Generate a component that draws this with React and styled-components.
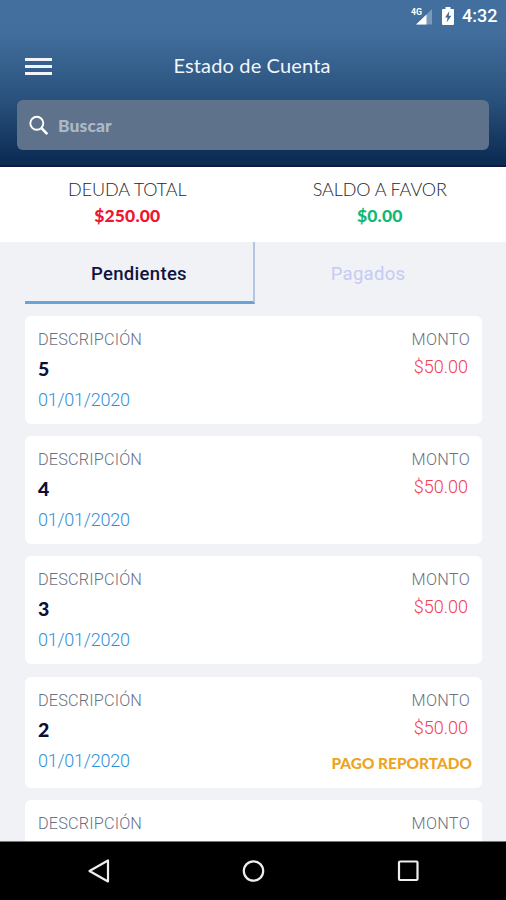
import React from 'react';
import styled, { createGlobalStyle } from 'styled-components';

const movements = [
  { id: 5, date: '01/01/2020', amount: '$50.00' },
  { id: 4, date: '01/01/2020', amount: '$50.00' },
  { id: 3, date: '01/01/2020', amount: '$50.00' },
  { id: 2, date: '01/01/2020', amount: '$50.00', reported: true },
];

const App = () => {
  return (
    <>
      <GlobalStyle />
      <Screen>
        <Header>
          <StatusBar>
            <svg width="22" height="20" viewBox="0 0 22 20">
              <path d="M21 3v15.500H5.500z" fill="#fff" fillOpacity=".3" />
              <path d="M15.500 8.500v10H5z" fill="#fff" />
              <text x="0" y="9" fill="#fff" fontSize="9.500" fontWeight="700" textLength="11" lengthAdjust="spacingAndGlyphs">4G</text>
            </svg>
            <svg width="12" height="18" viewBox="0 0 12 18">
              <path d="M3.500 0h5v2H11a1 1 0 0 1 1 1v14a1 1 0 0 1-1 1H1a1 1 0 0 1-1-1V3a1 1 0 0 1 1-1h2.500z" fill="#fff" />
              <path d="M7.500 4 3 10.500h2.600L4.700 15.500 9.300 8.800H6.700z" fill="#3d6b99" />
            </svg>
            <Clock>4:32</Clock>
          </StatusBar>
          <TitleBar>
            <MenuButton aria-label="Menú">
              <span />
              <span />
              <span />
            </MenuButton>
            <h1>Estado de Cuenta</h1>
          </TitleBar>
          <SearchBox>
            <svg width="20" height="21" viewBox="0 0 20 21" fill="none" stroke="#fff">
              <circle cx="7.800" cy="8.300" r="6.500" strokeWidth="1.900" />
              <path d="m12.500 13.100 5.800 6" strokeWidth="2.600" />
            </svg>
            <span>Buscar</span>
          </SearchBox>
        </Header>

        <Summary>
          <Balance $color="#f0142f">
            <span>DEUDA TOTAL</span>
            <strong>$250.00</strong>
          </Balance>
          <Balance $color="#10b978">
            <span>SALDO A FAVOR</span>
            <strong>$0.00</strong>
          </Balance>
        </Summary>

        <Tabs>
          <Tab $active>Pendientes</Tab>
          <Tab>Pagados</Tab>
        </Tabs>

        <List>
          {movements.map((item) => (
            <Card key={item.id} $reported={item.reported}>
              <Column>
                <Label>DESCRIPCIÓN</Label>
                <Number>{item.id}</Number>
                <DateText>{item.date}</DateText>
              </Column>
              <Column $end>
                <Label $wide>MONTO</Label>
                <Amount>{item.amount}</Amount>
                {item.reported && <Reported>PAGO REPORTADO</Reported>}
              </Column>
            </Card>
          ))}
          <PartialCard>
            <Label>DESCRIPCIÓN</Label>
            <Label $wide>MONTO</Label>
          </PartialCard>
        </List>

        <NavBar>
          <svg width="24" height="24" viewBox="0 0 24 24">
            <path d="M22 1.500v21L3.500 12z" />
          </svg>
          <svg width="24" height="24" viewBox="0 0 24 24">
            <circle cx="12.500" cy="12" r="9.700" />
          </svg>
          <svg width="24" height="24" viewBox="0 0 24 24">
            <rect x="3" y="2.500" width="18.500" height="18.500" rx="1" />
          </svg>
        </NavBar>
      </Screen>
    </>
  );
};

const GlobalStyle = createGlobalStyle`
  * {
    box-sizing: border-box;
  }

  body {
    margin: 0;
    font-family: Roboto, sans-serif;
  }
`;

const Screen = styled.div`
  width: 506px;
  height: 900px;
  display: flex;
  flex-direction: column;
  overflow: hidden;
  background: #f0f2f6;
`;

const Header = styled.header`
  height: 167px;
  flex: none;
  background: linear-gradient(180deg, #426f9f 0%, #426e9d 20%, #28507b 62%, #0b2b53 98%);
  border-bottom: 2px solid #15134a;
`;

const StatusBar = styled.div`
  height: 32px;
  padding-right: 9px;
  display: flex;
  align-items: center;
  justify-content: flex-end;

  svg:first-child {
    margin-right: 9px;
  }
`;

const Clock = styled.span`
  width: 35px;
  margin-left: 8px;
  color: #fff;
  font-size: 18px;
  font-weight: 500;
  line-height: 32px;
  white-space: nowrap;
`;

const TitleBar = styled.div`
  height: 68px;
  padding: 0 25px;
  display: grid;
  grid-template-columns: 27px 1fr 27px;
  align-items: center;

  h1 {
    margin: 0;
    padding: 0 2px 2px 0;
    color: #f2f6fb;
    font-family: Lato, sans-serif;
    font-size: 20px;
    font-weight: 400;
    letter-spacing: 0.15px;
    text-align: center;
  }
`;

const MenuButton = styled.button`
  display: flex;
  flex-direction: column;
  gap: 4px;
  padding: 0;
  border: 0;
  background: none;

  span {
    width: 27px;
    height: 3px;
    background: #f1f5fa;
  }
`;

const SearchBox = styled.div`
  height: 50px;
  margin: 0 17px;
  padding-left: 12px;
  display: flex;
  align-items: center;
  gap: 9px;
  border-radius: 6px;
  background: #5e738b;

  span {
    color: #adb9c7;
    font-family: Lato, sans-serif;
    font-size: 17.5px;
    font-weight: 900;
    letter-spacing: 0.1px;
  }
`;

const Summary = styled.section`
  height: 75px;
  flex: none;
  padding: 10px 0 0 1px;
  display: grid;
  grid-template-columns: 1fr 1fr;
  background: #fff;
`;

const Balance = styled.div`
  display: flex;
  flex-direction: column;
  align-items: center;
  font-family: Lato, sans-serif;

  span {
    color: #26262b;
    font-size: 18px;
    font-weight: 300;
    line-height: 24px;
    letter-spacing: -0.1px;
  }

  strong {
    color: ${({ $color }) => $color};
    font-size: 17.5px;
    font-weight: 900;
    line-height: 29px;
    letter-spacing: 0.15px;
  }
`;

const Tabs = styled.nav`
  height: 62px;
  flex: none;
  padding: 0 25px;
  display: grid;
  grid-template-columns: 230px 1fr;
  grid-template-rows: 62px;
`;

const Tab = styled.div`
  color: ${({ $active }) => ($active ? '#11143e' : '#c4cbf5')};
  font-size: 18.5px;
  font-weight: ${({ $active }) => ($active ? 500 : 400)};
  letter-spacing: 0.3px;
  line-height: 64px;
  text-align: center;
  border-bottom: ${({ $active }) => ($active ? '3px solid #6ca3d5' : '0')};
  border-right: ${({ $active }) => ($active ? '2px solid #b4c4e3' : '0')};
`;

const List = styled.main`
  flex: 1;
  min-height: 0;
  padding: 12px 24px 0 25px;
  display: flex;
  flex-direction: column;
  gap: 12.2px;
  overflow: hidden;
`;

const Card = styled.article`
  height: ${({ $reported }) => ($reported ? '111px' : '108px')};
  flex: none;
  padding: 12px 12px 0 13px;
  display: flex;
  justify-content: space-between;
  border-radius: 6px;
  background: #fff;
`;

const PartialCard = styled(Card)`
  height: auto;
  flex: 1;
  border-radius: 6px 6px 0 0;
`;

const Column = styled.div`
  display: flex;
  flex-direction: column;
  align-items: ${({ $end }) => ($end ? 'flex-end' : 'flex-start')};
`;

const Label = styled.span`
  color: #697184;
  font-size: 16.3px;
  font-weight: 300;
  line-height: 24px;
  letter-spacing: ${({ $wide }) => ($wide ? '0.3px' : '0.15px')};
`;

const Number = styled.span`
  color: #0b1037;
  font-family: Lato, sans-serif;
  font-size: 19.5px;
  font-weight: 900;
  line-height: 33px;
`;

const DateText = styled.span`
  color: #2f90da;
  font-size: 18px;
  font-weight: 300;
  line-height: 30px;
  letter-spacing: -0.25px;
`;

const Amount = styled.span`
  margin-right: 2px;
  color: #f54052;
  font-size: 18px;
  font-weight: 300;
  line-height: 30px;
`;

const Reported = styled.span`
  margin: 7px -2px 0 0;
  color: #eda51f;
  font-family: Lato, sans-serif;
  font-size: 15.4px;
  font-weight: 900;
  line-height: 26px;
`;

const NavBar = styled.footer`
  height: 59px;
  flex: none;
  padding: 0 86px;
  display: flex;
  align-items: center;
  justify-content: space-between;
  border-top: 1px solid #777;
  background: #000;

  svg {
    fill: none;
    stroke: #eee;
    stroke-width: 2.2;
    stroke-linejoin: round;
  }
`;

export default App;
